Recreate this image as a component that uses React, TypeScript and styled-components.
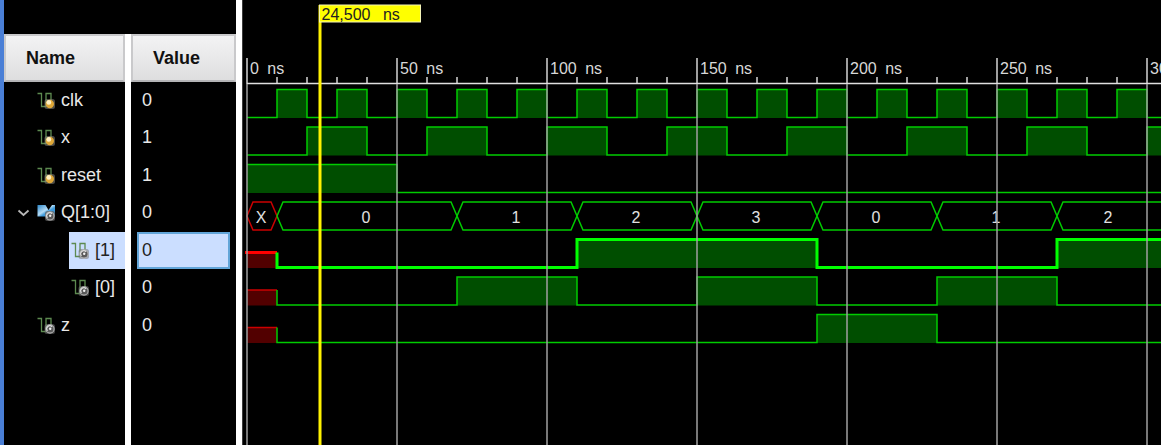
import React, { useLayoutEffect, useRef, useState } from "react";
import styled, { createGlobalStyle } from "styled-components";

const GlobalStyle = createGlobalStyle`
  * { box-sizing: border-box; }
  body {
    margin: 0;
    background: #000;
    font-family: "Liberation Sans", Arial, sans-serif;
  }
`;

/* ---------- data ---------- */

type Level = "x" | 0 | 1;
type Edge = [time: number, level: Level];
type IconKind = "input" | "bus" | "inner";

interface Signal {
  name: string;
  value: string;
  icon: IconKind;
  depth: number;
  selected?: boolean;
  period?: number;
  edges?: Edge[];
  bus?: [number, string][];
}

const signals: Signal[] = [
  { name: "clk", value: "0", icon: "input", depth: 0, period: 20, edges: [[0, 0], [10, 1]] },
  { name: "x", value: "1", icon: "input", depth: 0, period: 40, edges: [[0, 0], [20, 1]] },
  { name: "reset", value: "1", icon: "input", depth: 0, edges: [[0, 1], [50, 0]] },
  {
    name: "Q[1:0]", value: "0", icon: "bus", depth: 0,
    bus: [[0, "X"], [10, "0"], [70, "1"], [110, "2"], [150, "3"], [190, "0"], [230, "1"], [270, "2"]],
  },
  { name: "[1]", value: "0", icon: "inner", depth: 1, selected: true, edges: [[0, "x"], [10, 0], [110, 1], [190, 0], [270, 1]] },
  { name: "[0]", value: "0", icon: "inner", depth: 1, edges: [[0, "x"], [10, 0], [70, 1], [110, 0], [150, 1], [190, 0], [230, 1], [270, 0]] },
  { name: "z", value: "0", icon: "inner", depth: 0, edges: [[0, "x"], [10, 0], [190, 1], [230, 0]] },
];

const CURSOR_NS = 24.5;
const PX_PER_NS = 3;
const ORIGIN = 4;
const WAVE_TOP = 89.5;
const WAVE_PITCH = 37.5;
const WAVE_HEIGHT = 28;

const toX = (ns: number) => ORIGIN + ns * PX_PER_NS;

/* ---------- layout ---------- */

const Viewer = styled.main`
  display: flex;
  min-height: 100vh;
  border-left: 4px solid #4a7fd6;
  background: #000;
`;

const SignalPanel = styled.section`
  display: flex;
  flex: none;
  padding-top: 34px;
  border-right: 6px solid #fff;
`;

const SignalTable = styled.table`
  display: grid;
  grid-template-columns: 121px 6px 105px;
  grid-template-rows: 48px repeat(3, 37px 38px) 37px 1fr;
  font-size: 18px;
  line-height: 20px;

  &::before {
    content: "";
    grid-column: 2;
    grid-row: 1 / -1;
    background: #fff;
  }
`;

const Group = styled.thead`
  display: contents;
`;

const Line = styled.tr`
  display: contents;
`;

const HeadCell = styled.th<{ $column: number }>`
  grid-column: ${(p) => p.$column};
  display: flex;
  align-items: center;
  padding: 0 20px;
  border: 2px solid #c9c9cb;
  border-bottom-color: #b4b4b6;
  background: linear-gradient(#f3f3f4, #dededf);
  color: #111;
  font-weight: bold;
`;

const NameCell = styled.th`
  grid-column: 1;
  display: flex;
  padding: 0;
  font-weight: normal;
  text-align: left;
`;

const Gutter = styled.span<{ $depth: number }>`
  display: flex;
  flex: none;
  align-items: center;
  justify-content: center;
  width: ${(p) => (p.$depth ? 65 : 31)}px;
  padding-left: 8px;
`;

const NameLabel = styled.span<{ $selected?: boolean }>`
  display: flex;
  flex: 1;
  align-items: center;
  gap: 6px;
  padding: 0 0 2px 2px;
  background: ${(p) => (p.$selected ? "#cbdeff" : "transparent")};
  color: ${(p) => (p.$selected ? "#222" : "#e8e8e8")};
  white-space: nowrap;
`;

const ValueCell = styled.td`
  grid-column: 3;
  display: flex;
  padding: 0 6px;
`;

const ValueBox = styled.span<{ $selected?: boolean }>`
  display: flex;
  flex: 1;
  align-items: center;
  padding: 0 3px 2px;
  border: 2px solid ${(p) => (p.$selected ? "#62a5d8" : "transparent")};
  background: ${(p) => (p.$selected ? "#cbdeff" : "transparent")};
  color: ${(p) => (p.$selected ? "#222" : "#e8e8e8")};
`;

const ToggleButton = styled.button`
  display: flex;
  padding: 0;
  border: 0;
  background: none;
  color: #b8b8b8;
  cursor: pointer;
`;

const WavePane = styled.section`
  flex: 1;
  min-width: 0;
  display: flex;
  border-left: 1px solid #3c3c3c;
`;

const Chart = styled.svg`
  display: block;
  flex: 1;
  min-width: 0;
  width: 100%;
  font-size: 16px;
`;

/* ---------- icons ---------- */

function WaveIcon({ locked }: { locked: boolean }) {
  return (
    <svg width="18" height="18" viewBox="0 0 18 18" aria-hidden="true">
      <path d="M0.5 2.5H4.5V15.5H9V2.5H14V9" fill="none" stroke="#5d8a50" strokeWidth="1.3" />
      <rect x="7.5" y="8" width="10.5" height="10" rx="2.5" fill={locked ? "#8a8880" : "#777"} opacity="0.55" />
      {locked ? (
        <>
          <circle cx="12.8" cy="13" r="4.2" fill="#dfa838" />
          <circle cx="11.8" cy="11.4" r="2.4" fill="#fff0c4" />
        </>
      ) : (
        <>
          <circle cx="13" cy="13" r="4.1" fill="#5a5a5a" stroke="#b4b4b4" strokeWidth="1.1" />
          <path d="M10.5 14.8a3 3 0 0 1 4.6-4" fill="none" stroke="#ddd" strokeWidth="1.1" />
          <circle cx="13.2" cy="12.8" r="1.2" fill="#f4f4f4" />
        </>
      )}
    </svg>
  );
}

function BusIcon() {
  return (
    <svg width="18" height="18" viewBox="0 0 18 18" aria-hidden="true">
      <defs>
        <linearGradient id="busBlue" x1="0" y1="0" x2="1" y2="1">
          <stop offset="0" stopColor="#2b86c8" />
          <stop offset="0.45" stopColor="#b4dcf6" />
          <stop offset="0.6" stopColor="#3f9bdc" />
          <stop offset="1" stopColor="#2f8fd4" />
        </linearGradient>
      </defs>
      <path d="M0.5 2H8.5L11.5 7L15 2H18V13.500H0.500Z" fill="url(#busBlue)" />
      <rect x="8" y="8" width="10" height="10" rx="2.500" fill="#666" opacity="0.75" />
      <circle cx="13" cy="13" r="4" fill="#5a5a5a" stroke="#b4b4b4" strokeWidth="1.1" />
      <path d="M10.500 14.800a3 3 0 0 1 4.600-4" fill="none" stroke="#ddd" strokeWidth="1.1" />
      <circle cx="13.200" cy="12.800" r="1.200" fill="#f4f4f4" />
    </svg>
  );
}

function ChevronIcon() {
  return (
    <svg width="13" height="8" viewBox="0 0 13 8" aria-hidden="true">
      <path d="M1.5 1.500L6.500 6L11.500 1.500" fill="none" stroke="currentColor" strokeWidth="1.800" />
    </svg>
  );
}

/* ---------- waveforms ---------- */

function expand(signal: Signal, end: number): Edge[] {
  const edges = signal.edges ?? [];
  if (!signal.period) return edges;
  const all: Edge[] = [];
  for (let t = 0; t < end; t += signal.period) {
    edges.forEach(([at, level]) => all.push([t + at, level]));
  }
  return all.filter(([t]) => t < end);
}

function LogicWave({ signal, top, end }: { signal: Signal; top: number; end: number }) {
  const low = top + WAVE_HEIGHT;
  const yOf = (level: Level) => (level === 1 ? top : level === 0 ? low : top + 13);
  const edges = expand(signal, end);
  const width = signal.selected ? 3 : 1.5;
  const green = signal.selected ? "#00ff00" : "#00cc00";
  const red = signal.selected ? "#ff0000" : "#cc0000";

  let path = "";
  edges.forEach(([t, level], i) => {
    const next = edges[i + 1]?.[0] ?? end;
    if (level === "x") {
      path += `M${toX(next)} ${yOf(level)}`;
      return;
    }
    path += `${i === 0 ? "M" : "L"}${toX(t)} ${yOf(level)}H${toX(next)}`;
  });

  return (
    <g>
      {edges.map(([t, level], i) => {
        if (level === 0) return null;
        const next = edges[i + 1]?.[0] ?? end;
        const y = yOf(level);
        return (
          <rect
            key={t}
            x={toX(t)}
            y={y}
            width={(next - t) * PX_PER_NS}
            height={low - y + 0.5}
            fill={level === "x" ? "#520000" : "#004e00"}
          />
        );
      })}
      {edges[0][1] === "x" && (
        <path d={`M${toX(0) - (signal.selected ? 2 : 0)} ${yOf("x")}H${toX(edges[1][0])}`} stroke={red} strokeWidth={width} />
      )}
      <path d={path} fill="none" stroke={green} strokeWidth={width} />
    </g>
  );
}

function BusWave({ values, top, end }: { values: [number, string][]; top: number; end: number }) {
  const slope = 6;
  const low = top + WAVE_HEIGHT;
  const mid = top + WAVE_HEIGHT / 2;
  return (
    <g fill="none" strokeWidth="1.5">
      {values.map(([t, label], i) => {
        const last = i === values.length - 1;
        const a = toX(t);
        const b = toX(last ? end : values[i + 1][0]);
        const shape = last
          ? `M${b} ${top}H${a + slope}L${a} ${mid}L${a + slope} ${low}H${b}`
          : `M${a} ${mid}L${a + slope} ${top}H${b - slope}L${b} ${mid}L${b - slope} ${low}H${a + slope}Z`;
        return (
          <g key={t}>
            <path d={shape} stroke={label === "X" ? "#cc0000" : "#00cc00"} />
            <text x={(a + b) / 2 - 1} y={mid + 7} textAnchor="middle" fill="#e0e0e0">{label}</text>
          </g>
        );
      })}
    </g>
  );
}

function Ruler({ end }: { end: number }) {
  const ticks = Array.from({ length: Math.floor(end / 10) + 1 }, (_, i) => i * 10);
  return (
    <g>
      {ticks.map((t) =>
        t % 50 === 0 ? (
          <g key={t}>
            <path d={`M${toX(t)} 58V84`} stroke="#d4d4d4" strokeWidth="1.5" />
            <text x={toX(t) + 3} y="74" fill="#d8d8d8">
              {t} <tspan dx="4">ns</tspan>
            </text>
          </g>
        ) : (
          <path key={t} d={`M${toX(t)} 77V83`} stroke="#d4d4d4" strokeWidth="1.5" />
        )
      )}
      <path d={`M${toX(0)} 83.500H${toX(end)}`} stroke="#e0e0e0" strokeWidth="1.5" />
    </g>
  );
}

function Waveforms() {
  const ref = useRef<SVGSVGElement>(null);
  const [width, setWidth] = useState(0);

  useLayoutEffect(() => {
    const node = ref.current;
    if (!node) return;
    const measure = () => setWidth(node.getBoundingClientRect().width);
    measure();
    const observer = new ResizeObserver(measure);
    observer.observe(node);
    return () => observer.disconnect();
  }, []);

  const end = Math.max(280, (width - ORIGIN) / PX_PER_NS);
  const majors = Array.from({ length: Math.floor(end / 50) + 1 }, (_, i) => i * 50);
  const cursor = toX(CURSOR_NS);

  return (
    <Chart ref={ref} role="img" aria-label="Signal waveforms">
      <Ruler end={end} />
      {signals.map((signal, i) => {
        const top = WAVE_TOP + i * WAVE_PITCH;
        return signal.bus ? (
          <BusWave key={signal.name} values={signal.bus} top={top} end={end} />
        ) : (
          <LogicWave key={signal.name} signal={signal} top={top} end={end} />
        );
      })}
      {majors.map((t) => (
        <line key={t} x1={toX(t)} x2={toX(t)} y1="84" y2="100%" stroke="#a0a0a0" strokeWidth="1.5" />
      ))}
      <line x1={cursor - 0.5} x2={cursor - 0.5} y1="5" y2="100%" stroke="#fff200" strokeWidth="3" />
      <rect x={cursor - 1} y="5" width="101" height="17" fill="#ffff00" stroke="#f4f4b8" />
      <text x={cursor + 1} y="20" fill="#222">
        24,500 <tspan dx="8">ns</tspan>
      </text>
    </Chart>
  );
}

/* ---------- app ---------- */

export default function App() {
  return (
    <>
      <GlobalStyle />
      <Viewer>
        <SignalPanel>
          <SignalTable>
            <Group>
              <Line>
                <HeadCell scope="col" $column={1}>Name</HeadCell>
                <HeadCell scope="col" $column={3}>Value</HeadCell>
              </Line>
            </Group>
            <Group as="tbody">
              {signals.map((s) => (
                <Line key={s.name}>
                  <NameCell scope="row">
                    <Gutter $depth={s.depth}>
                      {s.icon === "bus" && (
                        <ToggleButton aria-label="Collapse Q[1:0]" aria-expanded="true">
                          <ChevronIcon />
                        </ToggleButton>
                      )}
                    </Gutter>
                    <NameLabel $selected={s.selected}>
                      {s.icon === "bus" ? <BusIcon /> : <WaveIcon locked={s.icon === "input"} />}
                      {s.name}
                    </NameLabel>
                  </NameCell>
                  <ValueCell>
                    <ValueBox $selected={s.selected}>{s.value}</ValueBox>
                  </ValueCell>
                </Line>
              ))}
            </Group>
          </SignalTable>
        </SignalPanel>
        <WavePane>
          <Waveforms />
        </WavePane>
      </Viewer>
    </>
  );
}
